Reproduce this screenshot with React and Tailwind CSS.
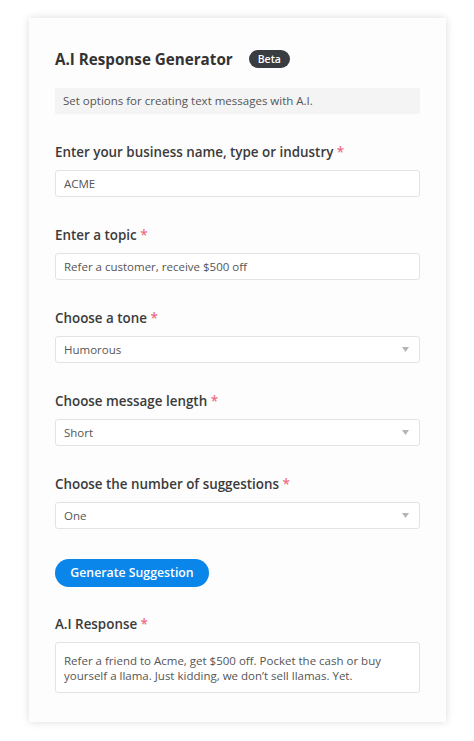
const fields = [
  { label: 'Enter your business name, type or industry', value: 'ACME', select: false },
  { label: 'Enter a topic', value: 'Refer a customer, receive $500 off', select: false },
  { label: 'Choose a tone', value: 'Humorous', select: true },
  { label: 'Choose message length', value: 'Short', select: true },
  { label: 'Choose the number of suggestions', value: 'One', select: true },
];

function Label({ children }) {
  return (
    <div className="h-5 text-[13.4px] leading-5 font-semibold text-[#3b3b3b]">
      {children} <span className="text-[#ec6e86]">*</span>
    </div>
  );
}

export default function App() {
  return (
    <div className="min-h-screen bg-white pt-[18px] pl-[29px] font-['Open_Sans',sans-serif]">
      <div className="w-[417px] h-[704px] bg-[#fdfdfd] shadow-[0_0_8px_rgba(0,0,0,0.14)] px-[26px] pt-[31px]">
        {/* Header */}
        <div className="flex items-center h-5">
          <h1 className="text-[15.2px] leading-5 font-bold text-[#333]">A.I Response Generator</h1>
          <span className="ml-4 h-[18px] px-[9px] rounded-full bg-[#393d42] text-white text-[10.5px] font-semibold leading-[18px]">
            Beta
          </span>
        </div>
        <div className="mt-[19px] h-[26px] bg-[#f4f4f4] px-2 text-[11.5px] leading-[26px] text-[#555]">
          Set options for creating text messages with A.I.
        </div>

        {/* Fields */}
        {fields.map((f) => (
          <div key={f.label} className="mt-[28px]">
            <Label>{f.label}</Label>
            <div className="mt-2 h-[27px] border border-[#e3e3e3] rounded-[3px] bg-white flex items-center justify-between pl-[8px] pr-[10px] text-[11.5px] text-[#555]">
              <span>{f.value}</span>
              {f.select && (
                <svg width="7" height="5" viewBox="0 0 7 5">
                  <path d="M0 0h7L3.5 5z" fill="#b5b5b5" />
                </svg>
              )}
            </div>
          </div>
        ))}

        <button className="mt-[30px] h-7 w-[154px] rounded-full bg-[#0a85ea] text-white text-[12.3px] font-semibold">
          Generate Suggestion
        </button>

        <div className="mt-[27px]">
          <Label>A.I Response</Label>
          <div className="mt-2 h-[51px] border border-[#e3e3e3] rounded-[3px] bg-white px-[8px] pt-[10px] text-[11.5px] leading-[15px] text-[#555]">
            Refer a friend to Acme, get $500 off. Pocket the cash or buy yourself a llama. Just kidding, we don’t sell llamas. Yet.
          </div>
        </div>
      </div>
    </div>
  );
}
